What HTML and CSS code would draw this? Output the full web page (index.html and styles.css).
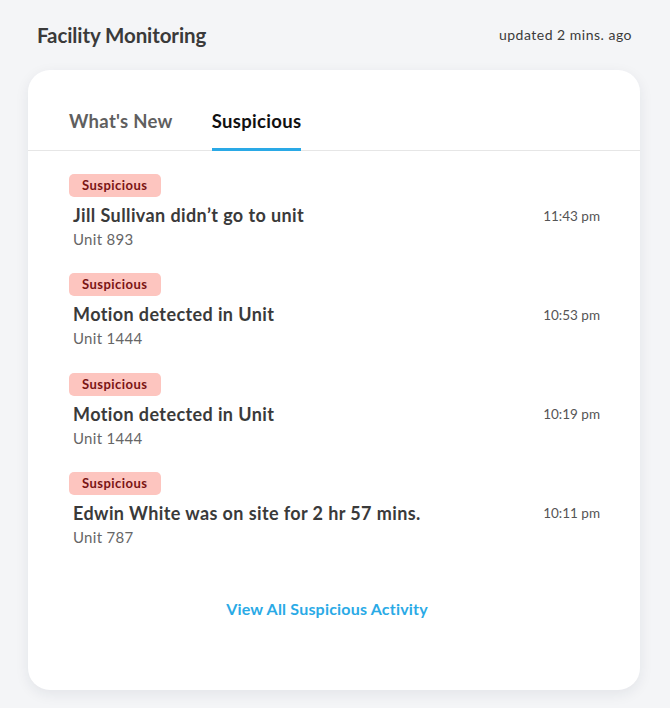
FILE: index.html
```html
<!DOCTYPE html>
<html>
<head>
<meta charset="utf-8">
<link rel="stylesheet" href="styles.css">
</head>
<body>
<header class="top">
  <h1 class="title">Facility Monitoring</h1>
  <span class="updated">updated 2 mins. ago</span>
</header>
<section class="card">
  <nav class="tabs">
    <span class="tab">What's New</span>
    <span class="tab active">Suspicious</span>
  </nav>
  <ul class="list">
    <li class="item">
      <span class="badge">Suspicious</span>
      <div class="row"><span class="name">Jill Sullivan didn’t go to unit</span><span class="time">11:43 pm</span></div>
      <div class="unit">Unit 893</div>
    </li>
    <li class="item">
      <span class="badge">Suspicious</span>
      <div class="row"><span class="name">Motion detected in Unit</span><span class="time">10:53 pm</span></div>
      <div class="unit">Unit 1444</div>
    </li>
    <li class="item">
      <span class="badge">Suspicious</span>
      <div class="row"><span class="name">Motion detected in Unit</span><span class="time">10:19 pm</span></div>
      <div class="unit">Unit 1444</div>
    </li>
    <li class="item">
      <span class="badge">Suspicious</span>
      <div class="row"><span class="name">Edwin White was on site for 2 hr 57 mins.</span><span class="time">10:11 pm</span></div>
      <div class="unit">Unit 787</div>
    </li>
  </ul>
  <div class="more"><a class="link" href="#">View All Suspicious Activity</a></div>
</section>
</body>
</html>
```
FILE: styles.css
```css
* { box-sizing: border-box; }
html, body { margin: 0; padding: 0; }
body {
  background: #f4f5f7;
  font-family: Lato, "Noto Sans", sans-serif;
  color: #3b3b3b;
  width: 670px;
  height: 708px;
  overflow: hidden;
}
.top {
  display: flex;
  justify-content: space-between;
  padding: 22px 38px 0 37px;
  height: 70px;
  align-items: flex-start;
}
.title {
  margin: 0;
  font-size: 20.5px;
  font-weight: 700;
  color: #3a3a3a;
  line-height: 26px;
  letter-spacing: -0.1px;
}
.updated {
  font-size: 14px;
  color: #3a3a3a;
  line-height: 26px;
  letter-spacing: 0.5px;
}
.card {
  margin-left: 28px;
  width: 612px;
  height: 620px;
  background: #fff;
  border-radius: 22px;
  box-shadow: 0 4px 14px rgba(30, 40, 60, 0.08);
  display: flex;
  flex-direction: column;
}
.tabs {
  display: flex;
  gap: 39px;
  padding: 0 41px;
  height: 81px;
  align-items: flex-end;
  border-bottom: 1px solid #e6e6e6;
}
.tab {
  font-size: 18.5px;
  font-weight: 700;
  color: #5f5f5f;
  padding-bottom: 16px;
  border-bottom: 3px solid transparent;
  line-height: 22px;
  margin-bottom: -1px;
  letter-spacing: 0.3px;
}
.tab.active {
  color: #111;
  border-bottom-color: #2aa9e6;
}
.list {
  list-style: none;
  margin: 0;
  padding: 23px 40px 0 45px;
}
.item {
  height: 99.3px;
}
.badge {
  display: inline-block;
  margin-left: -4px;
  background: #fdc5bf;
  color: #7a1414;
  font-size: 13px;
  font-weight: 700;
  line-height: 23px;
  padding: 0 14px 0 13px;
  border-radius: 5px;
  letter-spacing: 0.45px;
}
.row {
  display: flex;
  justify-content: space-between;
  align-items: center;
  margin-top: 6px;
}
.name {
  font-size: 18px;
  font-weight: 700;
  color: #3a3a3a;
  line-height: 25px;
  letter-spacing: 0.4px;
}
.time {
  font-size: 13.5px;
  color: #555;
}
.unit {
  font-size: 15px;
  color: #666;
  line-height: 23px;
  letter-spacing: 0.3px;
}
.more {
  text-align: center;
  margin-top: 28px;
  padding-right: 14px;
}
.link {
  color: #2aaae6;
  font-weight: 700;
  font-size: 16px;
  text-decoration: none;
  letter-spacing: 0.2px;
}
```
